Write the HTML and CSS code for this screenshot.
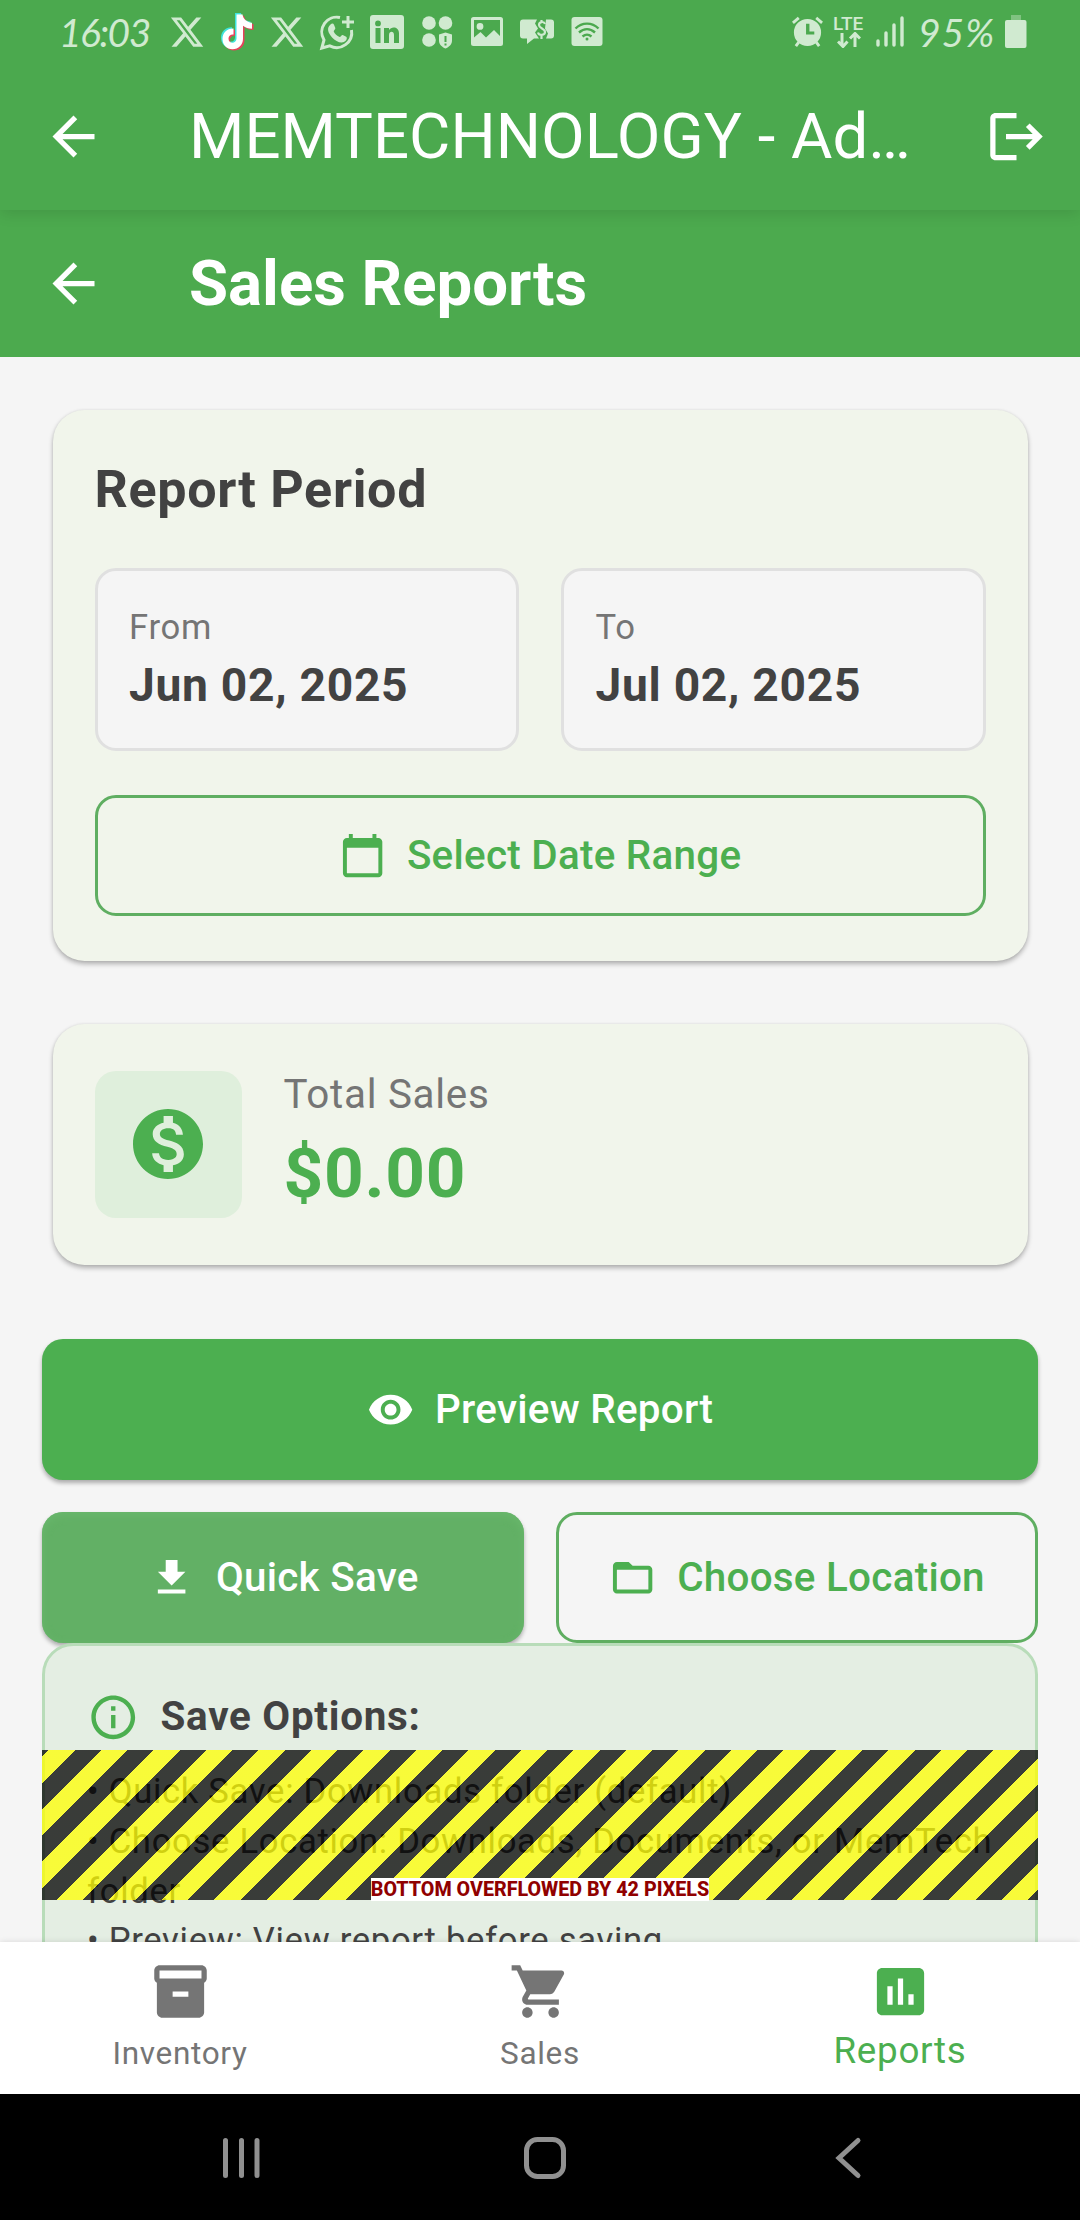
FILE: index.html
```html
<!DOCTYPE html>
<html lang="en">

<head>
    <meta charset="UTF-8">
    <meta name="viewport" content="width=device-width, initial-scale=1.0">
    <title>Sales Reports</title>
    <link rel="stylesheet" href="styles.css">
</head>

<body>
    <!-- icons used more than once -->
    <svg class="defs" width="0" height="0">
        <symbol id="arrow-back" viewBox="0 0 24 24">
            <path d="M20 11H7.83l5.59-5.59L12 4l-8 8 8 8 1.41-1.41L7.83 13H20v-2z" />
        </symbol>
        <symbol id="x-logo" viewBox="0 0 34 38">
            <path transform="translate(-1 1)  scale(1.5)"
                d="M18.244 2.25h3.308l-7.227 8.26 8.502 11.24H16.17l-5.214-6.817L4.99 21.75H1.68l7.73-8.835L1.254 2.25H8.08l4.713 6.231zm-1.161 17.52h1.833L7.084 4.126H5.117z" />
        </symbol>
        <symbol id="note" viewBox="0 0 34 38">
            <path d="M15 0h6c.6 4.500 4 8 9.500 8.500v6c-3.600 0-6.500-1-9-3v13c0 6-4.500 10.500-10.500 10.500S1 30.500 1 24.500s4.500-10.500 11-10.300v6.200c-3-.4-5 1.500-5 4.200s1.900 4 4 4 4-1.600 4-4.200z" />
        </symbol>
    </svg>

    <header class="app-header">
        <div class="status-bar">
            <span class="clock">16:03</span>
            <div class="notifications">
                <svg viewBox="0 0 34 38"><use href="#x-logo" /></svg>
                <svg viewBox="0 0 34 38">
                    <use href="#note" width="34" height="38" fill="#3fe3dc" />
                    <use href="#note" width="34" height="38" x="3" y="2.500" fill="#e8415a" />
                    <use href="#note" width="34" height="38" x="1.500" y="1.200" fill="#fff" />
                </svg>
                <svg viewBox="0 0 34 38"><use href="#x-logo" /></svg>
                <svg viewBox="0 0 34 38">
                    <path class="line" d="M20 4.500A15 15 0 0 0 4 27L1.800 35l8-2.200A15 15 0 0 0 31.500 17" />
                    <path d="M10.500 11.500c1.400-1.300 2.800-1.300 3.500.3l1.300 3.300c.3 1.200-1.600 2.700-1.600 3.300 1 2.500 3.300 4.500 6 5.600.8.200 2-2.300 3-2l3.500 1.800c1 .6.700 2.600-.3 3.800-3.400 4-10 1-13.800-3.200-3.800-4.300-6-9.300-1.600-12.900zM26.500 3h3v4.500H34v3h-4.500V15h-3v-4.500H22v-3h4.500z" />
                </svg>
                <svg viewBox="0 0 34 38">
                    <path fill-rule="evenodd" d="M3 2h28a3 3 0 0 1 3 3v28a3 3 0 0 1-3 3H3a3 3 0 0 1-3-3V5a3 3 0 0 1 3-3zM5.500 15v15h5V15zM8 7.500a2.900 2.900 0 1 0 0 5.800 2.900 2.900 0 0 0 0-5.800zM14 15v15h5v-8c0-4 5-4.500 5 0v8h5v-9.500c0-7-7.500-7.500-10-3.500v-2z" />
                </svg>
                <svg viewBox="0 0 34 38">
                    <circle cx="9" cy="10" r="6.800" />
                    <circle cx="25.500" cy="10" r="6.800" />
                    <circle cx="9" cy="27" r="6.800" />
                    <path fill-rule="evenodd" d="M25.500 19.500l6.500 2v6c0 4-3 6.500-6.500 8-3.500-1.500-6.500-4-6.500-8v-6zM24.500 23v6h2v-6zM24.500 30.500v2h2v-2z" />
                </svg>
                <svg viewBox="0 0 34 38">
                    <path fill-rule="evenodd" d="M3.500 4h27A2.500 2.500 0 0 1 33 6.500v24a2.500 2.500 0 0 1-2.500 2.500h-27A2.500 2.500 0 0 1 1 30.500v-24A2.500 2.500 0 0 1 3.500 4zM4 7v17.500l6.500-5.500 5.500 5.500 8-7.500 6 6V7zM10 10a3.400 3.400 0 1 1 0 6.800A3.400 3.400 0 0 1 10 10z" />
                </svg>
                <svg viewBox="0 0 34 38">
                    <path d="M3 6.500h14l-2 4 3 5-3 4 4 6h-5L7 31v-5.500H3a3 3 0 0 1-3-3v-13a3 3 0 0 1 3-3zM26 6.500h5a3 3 0 0 1 3 3v13a3 3 0 0 1-3 3h-5l2-5-3-5z" />
                    <path class="line thin" d="M25 11c-1-3-6-2.500-6 1s6 3.500 6 7-6 4-7 .500M21.500 7v2M21.500 23v3" />
                </svg>
                <svg viewBox="0 0 34 38">
                    <rect x="1.500" y="4" width="31" height="29" rx="3" />
                    <g class="wifi">
                        <path d="M5.500 15.500c6.500-6.500 16.500-6.500 23 0M9 19.500c5-4.500 11-4.500 16 0M12.500 23.500c3-2.500 6-2.500 9 0" />
                        <circle cx="17" cy="26" r="1.500" />
                    </g>
                </svg>
            </div>
            <div class="system-icons">
                <svg class="alarm" viewBox="0 0 34 34">
                    <path fill-rule="evenodd" d="M17 4a14 14 0 1 1 0 28 14 14 0 0 1 0-28zM15.500 9v11H24v-3h-5V9z" />
                    <path class="line" d="M2 8l6-5M32 8l-6-5M8 28l-3 4M26 28l3 4" />
                </svg>
                <span class="lte">LTE
                    <svg viewBox="0 0 24 16"><path d="M5 1v13M1 9.500l5 5 4.500-5M18 15V2M13 6.500l5-5 5 5" /></svg>
                </span>
                <svg class="signal" viewBox="0 0 28 32">
                    <path d="M2 26v4M10 18v12M18 10v20M26 3v27" />
                </svg>
                <span class="percent">95%</span>
                <svg class="battery" viewBox="0 0 22 33">
                    <path opacity=".4" d="M6 0h10v6H6z" />
                    <rect y="5" width="21.500" height="28" rx="2" />
                </svg>
            </div>
        </div>
        <div class="app-bar">
            <svg class="icon"><use href="#arrow-back" /></svg>
            <h1 class="app-title">MEMTECHNOLOGY - Ad…</h1>
            <svg class="icon" viewBox="0 0 24 24">
                <path d="M17 7l-1.410 1.410L18.170 11H8v2h10.170l-2.580 2.580L17 17l5-5zM4 5h8V3H4c-1.100 0-2 .9-2 2v14c0 1.100.9 2 2 2h8v-2H4V5z" />
            </svg>
        </div>
    </header>

    <div class="app-bar page-bar">
        <svg class="icon"><use href="#arrow-back" /></svg>
        <h2 class="app-title">Sales Reports</h2>
    </div>

    <main>
        <section class="card">
            <h3 class="card-title">Report Period</h3>
            <div class="dates">
                <div class="date">
                    <span class="date-label">From</span>
                    <b class="date-value">Jun 02, 2025</b>
                </div>
                <div class="date">
                    <span class="date-label">To</span>
                    <b class="date-value">Jul 02, 2025</b>
                </div>
            </div>
            <button class="btn btn-outline btn-range">
                <svg viewBox="0 0 24 24"><path d="M20 3h-1V1h-2v2H7V1H5v2H4c-1.100 0-2 .9-2 2v16c0 1.100.9 2 2 2h16c1.100 0 2-.9 2-2V5c0-1.100-.9-2-2-2zm0 18H4V8h16v13z" /></svg>
                Select Date Range
            </button>
        </section>

        <section class="card total">
            <div class="total-icon">
                <svg viewBox="0 0 24 24"><path d="M12 2C6.480 2 2 6.480 2 12s4.480 10 10 10 10-4.480 10-10S17.520 2 12 2zm1.410 16.090V20h-2.670v-1.930c-1.710-.36-3.160-1.460-3.270-3.400h1.960c.1 1.050.82 1.870 2.650 1.870 1.960 0 2.400-.98 2.400-1.590 0-.83-.44-1.610-2.670-2.140-2.480-.6-4.180-1.620-4.180-3.670 0-1.720 1.390-2.840 3.110-3.210V4h2.670v1.950c1.860.45 2.790 1.860 2.850 3.390H14.300c-.05-1.110-.64-1.870-2.220-1.870-1.500 0-2.400.68-2.400 1.640 0 .84.65 1.390 2.670 1.910s4.180 1.390 4.180 3.910c-.01 1.830-1.380 2.830-3.120 3.160z" /></svg>
            </div>
            <div>
                <div class="total-label">Total Sales</div>
                <div class="total-value">$0.00</div>
            </div>
        </section>

        <button class="btn btn-solid btn-preview">
            <svg viewBox="0 0 24 24"><path d="M12 4.500C7 4.500 2.730 7.610 1 12c1.730 4.390 6 7.500 11 7.500s9.270-3.110 11-7.500c-1.730-4.390-6-7.500-11-7.500zM12 17c-2.760 0-5-2.240-5-5s2.240-5 5-5 5 2.240 5 5-2.240 5-5 5zm0-8c-1.660 0-3 1.340-3 3s1.340 3 3 3 3-1.340 3-3-1.340-3-3-3z" /></svg>
            Preview Report
        </button>

        <div class="actions">
            <button class="btn btn-solid btn-save">
                <svg viewBox="0 0 24 24"><path d="M19 9h-4V3H9v6H5l7 7 7-7zM5 18v2h14v-2H5z" /></svg>
                Quick Save
            </button>
            <button class="btn btn-outline">
                <svg viewBox="0 0 24 24"><path d="M20 6h-8l-2-2H4c-1.100 0-1.990.9-1.990 2L2 18c0 1.100.9 2 2 2h16c1.100 0 2-.9 2-2V8c0-1.100-.9-2-2-2zm0 12H4V8h16v10z" /></svg>
                Choose Location
            </button>
        </div>

        <section class="options">
            <h4 class="options-title">
                <svg viewBox="0 0 24 24"><path d="M11 7h2v2h-2zm0 4h2v6h-2zm1-9C6.480 2 2 6.480 2 12s4.480 10 10 10 10-4.480 10-10S17.520 2 12 2zm0 18c-4.410 0-8-3.590-8-8s3.590-8 8-8 8 3.590 8 8-3.590 8-8 8z" /></svg>
                Save Options:
            </h4>
            <p class="options-text">• Quick Save: Downloads folder (default)<br>
                • Choose Location: Downloads, Documents, or MemTech<br>folder<br>
                • Preview: View report before saving</p>
            <div class="overflow-stripes">
                <span class="overflow-label">BOTTOM OVERFLOWED BY 42 PIXELS</span>
            </div>
        </section>
    </main>

    <nav class="tabs">
        <a class="tab">
            <svg class="icon" viewBox="0 0 24 24"><path d="M20 2H4c-1 0-2 .9-2 2v3.010c0 .72.43 1.340 1 1.690V20c0 1.100 1.100 2 2 2h14c.9 0 2-.9 2-2V8.700c.57-.35 1-.97 1-1.690V4c0-1.100-1-2-2-2zm-5 12H9v-2h6v2zm5-7H4V4l16-.02V7z" /></svg>
            <span>Inventory</span>
        </a>
        <a class="tab">
            <svg class="icon" viewBox="0 0 24 24"><path d="M7 18c-1.100 0-1.990.9-1.990 2S5.900 22 7 22s2-.9 2-2-.9-2-2-2zM1 2v2h2l3.600 7.590-1.350 2.450c-.16.28-.25.61-.25.96 0 1.100.9 2 2 2h12v-2H7.420c-.14 0-.25-.11-.25-.25l.03-.12.9-1.630h7.450c.75 0 1.410-.41 1.750-1.030l3.580-6.490c.08-.14.12-.31.12-.48 0-.55-.45-1-1-1H5.210l-.94-2H1zm16 16c-1.100 0-1.990.9-1.990 2s.89 2 1.990 2 2-.9 2-2-.9-2-2-2z" /></svg>
            <span>Sales</span>
        </a>
        <a class="tab active">
            <svg class="icon" viewBox="0 0 24 24"><path d="M19 3H5c-1.100 0-2 .9-2 2v14c0 1.100.9 2 2 2h14c1.100 0 2-.9 2-2V5c0-1.100-.9-2-2-2zM9 17H7v-7h2v7zm4 0h-2V7h2v10zm4 0h-2v-4h2v4z" /></svg>
            <span>Reports</span>
        </a>
    </nav>

    <footer class="system-nav">
        <svg viewBox="0 0 44 44"><path d="M5.500 4.500v35M21.500 4.500v35M37 4.500v35" /></svg>
        <svg viewBox="0 0 44 44"><rect x="3.500" y="3.500" width="37" height="37" rx="11" /></svg>
        <svg viewBox="0 0 44 44"><path d="M32 4.500L13 22l19 17.500" /></svg>
    </footer>
</body>

</html>
```
FILE: styles.css
```css
html {
    box-sizing: border-box;
    font-family: Roboto, sans-serif;
}

*,
*:before,
*:after {
    box-sizing: inherit;
}

body {
    margin: 0;
    width: 1080px;
    height: 2220px;
    display: flex;
    flex-direction: column;
    overflow: hidden;
    background: #f5f5f5;
    color: #424242;
}

h1, h2, h3, h4, p {
    margin: 0;
}

svg {
    display: block;
    flex: none;
    fill: currentColor;
}

.defs {
    position: absolute;
}

.icon {
    width: 63px;
    height: 63px;
}

/******* Status bar ********/
.app-header {
    position: relative;
    z-index: 1;
    height: 210px;
    flex: none;
    background: #4ba94e;
    color: #fff;
    box-shadow: 0 4px 14px rgba(0, 0, 0, .11);
}

.status-bar {
    display: flex;
    height: 63px;
    padding: 13px 53px 0 59px;
    color: #d0ead0;
}

.clock,
.percent {
    font-family: Lato, sans-serif;
    font-style: italic;
    font-size: 39px;
    line-height: 39px;
    white-space: nowrap;
}

.clock {
    width: 111px;
    letter-spacing: -1.5px;
}

.notifications {
    display: flex;
    gap: 16px;
}

.notifications svg {
    width: 34px;
    height: 38px;
    overflow: visible;
}

.line {
    fill: none;
    stroke: currentColor;
    stroke-width: 3;
}

.thin {
    stroke-width: 2.2;
}

.wifi {
    fill: #4ba94e;
}

.wifi path {
    fill: none;
    stroke: #4ba94e;
    stroke-width: 2.4;
}

.system-icons {
    display: flex;
    margin-left: auto;
}

.alarm {
    width: 33px;
    height: 33px;
    margin: 2px 9px 0 0;
}

.lte {
    width: 32px;
    margin-right: 11px;
    padding-top: 3px;
    font: 500 19px/15px Roboto, sans-serif;
}

.lte svg {
    width: 24px;
    height: 16px;
    margin: 1px 0 0 4px;
    fill: none;
    stroke: currentColor;
    stroke-width: 3;
}

.signal {
    width: 28px;
    height: 32px;
    margin: 2px 14px 0 0;
    stroke: currentColor;
    stroke-width: 3.4;
    stroke-linecap: round;
}

.percent {
    width: 87px;
    letter-spacing: 1px;
}

.battery {
    width: 22px;
    height: 33px;
    margin-top: 2px;
}

/******* App bars ********/
.app-bar {
    display: flex;
    align-items: center;
    height: 147px;
    flex: none;
    padding: 0 32px 0 42px;
}

.app-title {
    flex: 1;
    margin-left: 84px;
    padding-top: 1px;
    font-size: 63.5px;
    font-weight: 400;
    line-height: 80px;
    white-space: nowrap;
}

.page-bar {
    background: #4caa4e;
    color: #fff;
}

.page-bar .app-title {
    font-weight: 700;
}

/******* Content ********/
main {
    flex: 1;
    min-height: 0;
    overflow: hidden;
    padding: 42px 42px 0;
}

.card {
    margin: 10.5px 10.5px 63px;
    padding: 42px;
    border-radius: 31.5px;
    background: #f1f5eb;
    box-shadow: 0 3px 5px rgba(0, 0, 0, .28), 0 0 3px rgba(0, 0, 0, .08);
}

.card-title {
    padding-top: 1px;
    margin-bottom: 41px;
    font-size: 52px;
    line-height: 74px;
    letter-spacing: .7px;
}

.dates {
    display: flex;
    gap: 42px;
    margin-bottom: 44.6px;
}

.date {
    flex: 1;
    padding: 32px 31.5px;
    border: 3px solid #e0e0e0;
    border-radius: 21px;
    background: #f5f5f5;
    height: 183.25px;
}

.date-label,
.date-value {
    display: block;
    letter-spacing: .7px;
}

.date-label {
    font-size: 34.65px;
    line-height: 49px;
    color: #757575;
}

.date-value {
    font-size: 46.2px;
    line-height: 66px;
}

.btn {
    display: flex;
    align-items: center;
    justify-content: center;
    gap: 21px;
    width: 100%;
    height: 131.25px;
    padding: 0;
    border: 0;
    border-radius: 21px;
    background: none;
    font-family: inherit;
    font-size: 40.4px;
    font-weight: 500;
    line-height: 57px;
    letter-spacing: .26px;
    white-space: nowrap;
    color: #4caf50;
}

.btn svg {
    width: 47.25px;
    height: 47.25px;
}

.btn-outline {
    border: 3px solid #5fae61;
}

.btn-solid {
    background: #4caf50;
    color: #fff;
    box-shadow: 0 3px 4px rgba(0, 0, 0, .3);
}

.btn-range {
    height: 120.8px;
    margin-bottom: 2.6px;
}

.total {
    display: flex;
    align-items: center;
    gap: 42px;
    height: 241.5px;
    margin-bottom: 73.5px;
}

.total-icon {
    padding: 31.5px;
    border-radius: 21px;
    background: #dfefdc;
    color: #4caf50;
}

.total-icon svg {
    width: 84px;
    height: 84px;
}

.total-label {
    font-size: 40.4px;
    line-height: 58px;
    letter-spacing: .7px;
    color: #757575;
}

.total-value {
    font-size: 69.3px;
    font-weight: 700;
    line-height: 99px;
    letter-spacing: .7px;
    color: #4caf50;
}

.btn-preview {
    height: 141.75px;
    margin-bottom: 31.5px;
}

.actions {
    display: grid;
    grid-template-columns: 1fr 1fr;
    gap: 31.5px;
}

.btn-save {
    background: #62b065;
    box-shadow: 0 3px 4px rgba(0, 0, 0, .3), inset 0 3px 8px #6ab86d;
}

/******* Save options ********/
.options {
    position: relative;
    height: 400px;
    padding: 42px;
    border: 3px solid #b8dcb9;
    border-radius: 31.5px;
    background: #e4eee3;
}

.options-title {
    display: flex;
    align-items: center;
    gap: 21px;
    margin-bottom: 21px;
    font-size: 40.4px;
    line-height: 58px;
    letter-spacing: .72px;
}

.options-title svg {
    width: 52.5px;
    height: 52.5px;
    color: #4caf50;
}

.options-text {
    font-size: 34.65px;
    line-height: 49.7px;
    letter-spacing: .68px;
    white-space: nowrap;
}

/* debug banner over the overflowing column */
.overflow-stripes {
    position: absolute;
    top: 103.500px;
    left: -3px;
    right: -3px;
    height: 150px;
    display: flex;
    align-items: flex-end;
    justify-content: center;
    background: repeating-linear-gradient(135deg,
            rgba(0, 0, 0, .75) 0 4.9px,
            rgba(255, 255, 0, .75) 4.9px 23.45px,
            rgba(0, 0, 0, .75) 23.45px 37.12px);
}

.overflow-label {
    margin-bottom: -1px;
    background: #fff;
    color: #900000;
    font-size: 19.7px;
    font-weight: 800;
    line-height: 23px;
    white-space: nowrap;
}

/******* Bottom tabs ********/
.tabs {
    position: relative;
    display: flex;
    height: 152px;
    flex: none;
    background: #fff;
    color: #757575;
    box-shadow: 0 0 6px rgba(0, 0, 0, .12);
}

.tab {
    flex: 1;
    display: flex;
    flex-direction: column;
    align-items: center;
    padding-top: 18px;
    font-size: 31.5px;
    line-height: 46px;
    letter-spacing: .7px;
}

.tab span {
    margin-top: 8px;
}

.active {
    color: #4caf50;
    font-size: 36.75px;
}

.active span {
    margin-top: 5px;
}

.system-nav {
    position: relative;
    display: flex;
    justify-content: space-between;
    height: 126px;
    flex: none;
    padding: 42px 210px 0 220px;
    background: #000;
}

.system-nav svg {
    width: 44px;
    height: 44px;
    fill: none;
    stroke: #909090;
    stroke-width: 5;
    stroke-linecap: round;
}
```
